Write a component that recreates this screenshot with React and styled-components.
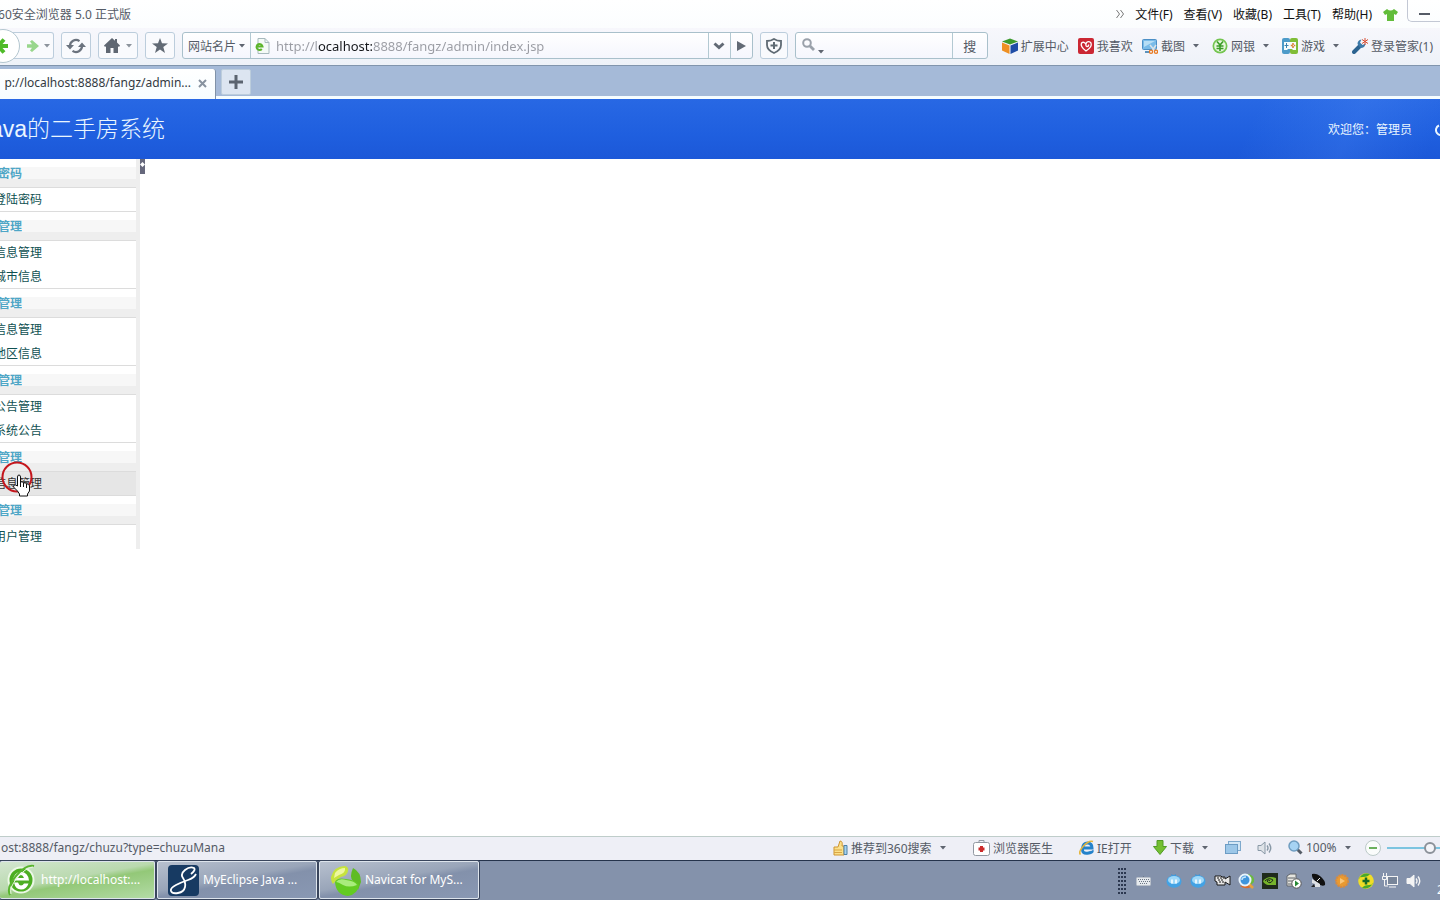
import styled, { createGlobalStyle } from 'styled-components';

const GlobalStyle = createGlobalStyle`
    * {
        box-sizing: border-box;
    }
    body {
        margin: 0;
        font-family: "Noto Sans", "Noto Sans CJK SC", sans-serif;
        font-size: 12px;
        color: #555b66;
    }
    button, input {
        font: inherit;
        color: inherit;
        margin: 0;
        padding: 0;
        border: 0;
        background: none;
    }
    svg {
        display: block;
        flex: none;
    }
`

const Window = styled.div`
    display: flex;
    flex-direction: column;
    min-height: 100vh;
    overflow: hidden;
    background: #fff;
`

/* ---------- title bar ---------- */

const TitleBar = styled.header`
    display: flex;
    align-items: center;
    justify-content: space-between;
    height: 28px;
    background: linear-gradient(#fff, #fbfdfe);
`

const Clip = styled.div`
    display: flex;
    justify-content: flex-end;
    width: ${props => props.$width}px;
    overflow: hidden;
    white-space: nowrap;
`

const MenuBar = styled.nav`
    display: flex;
    align-items: center;
    gap: 11px;
    height: 28px;
    color: #111;
`

const MenuButton = styled.button`
    line-height: 20px;
    padding-top: 1px;
    white-space: nowrap;
`

const MinimizeButton = styled.button`
    align-self: flex-start;
    display: flex;
    align-items: center;
    width: 33px;
    height: 22px;
    margin-left: -2px;
    padding: 8px 0 0 11px;
    border: 1px solid #c3c8d4;
    border-width: 0 0 1px 1px;
    border-radius: 0 0 0 5px;
`

/* ---------- toolbar ---------- */

const Toolbar = styled.div`
    display: flex;
    align-items: center;
    gap: 7px;
    height: 38px;
    padding-bottom: 2px;
    background: linear-gradient(#f7f7fc, #eef2f8);
    border-bottom: 1px solid #8195ad;
`

const NavGroup = styled.div`
    display: flex;
    align-items: center;
    width: 54px;
    height: 27px;
    border: 1px solid #bccddc;
    border-left: 0;
    border-radius: 0 3px 3px 0;
    background: #f9fafd;
`

const BackButton = styled.button`
    display: flex;
    align-items: center;
    justify-content: center;
    flex: none;
    width: 34px;
    height: 34px;
    margin-left: -14px;
    border: 1px solid #b3c6cf;
    border-radius: 50%;
    background: #fff;
`

const PlainButton = styled.button`
    display: flex;
    align-items: center;
    justify-content: center;
    gap: 5px;
    height: 100%;
    padding: 0 7px;
    white-space: nowrap;
`

const ToolButton = styled.button`
    display: flex;
    align-items: center;
    justify-content: center;
    gap: 6px;
    flex: none;
    width: ${props => props.$width}px;
    height: 27px;
    border: 1px solid #bccddc;
    border-radius: 3px;
    background: #f9fafd;
`

const AddressBar = styled.form`
    display: flex;
    align-items: center;
    flex: 1;
    min-width: 0;
    height: 27px;
    border: 1px solid #a9c0cb;
    border-radius: 3px;
    background: linear-gradient(#fff, #f5f6fd);
`

const AddressPart = styled.button`
    display: flex;
    align-items: center;
    justify-content: center;
    gap: 3px;
    flex: none;
    width: ${props => props.$width}px;
    height: 100%;
    white-space: nowrap;
    border: solid #b3c9d2;
    border-width: ${props => props.$first ? '0 1px 0 0' : '0 0 0 1px'};
`

/* the host is darker than the rest of the address */
const AddressInput = styled.input`
    flex: 1;
    min-width: 0;
    height: 25px;
    margin: 0 4px 0 6px;
    font-size: 13px;
    color: #9a9ca3;
    background: linear-gradient(to right, #9a9ca3 42px, #16181c 42px, #16181c 97px, #9a9ca3 97px);
    background-clip: text;
    -webkit-text-fill-color: transparent;
    outline: 0;
`

const SearchBox = styled.form`
    display: flex;
    align-items: center;
    gap: 3px;
    width: 193px;
    height: 27px;
    padding-left: 6px;
    border: 1px solid #a9c0cb;
    border-radius: 3px;
    background: linear-gradient(#fff, #f5f6fd);
`

const SearchType = styled.button`
    display: flex;
    align-items: flex-end;
    gap: 3px;

    & > svg:first-child {
        margin-bottom: 3px;
    }
`

const SearchInput = styled.input`
    flex: 1;
    min-width: 0;
    height: 100%;
    outline: 0;
`

const SearchButton = styled(AddressPart)`
    font-size: 13px;
`

const LinkBar = styled.nav`
    display: flex;
    align-items: center;
    gap: 9px;
    margin: 0 7px;
`

const LinkButton = styled.button`
    display: flex;
    align-items: center;
    gap: 3px;
    padding-right: ${props => props.$menu ? 4 : 0}px;
    white-space: nowrap;

    & > span + svg {
        margin-left: 5px;
    }
`

/* ---------- tabs ---------- */

const TabBar = styled.div`
    display: flex;
    gap: 5px;
    height: 33px;
    padding-top: 3px;
    background: #a5bad8;
    border-bottom: 3px solid #f6fdff;
`

const Tab = styled.div`
    display: flex;
    align-items: center;
    gap: 7px;
    width: 216px;
    height: 30px;
    padding-bottom: 3px;
    color: #333a42;
    background: linear-gradient(#fff, #f6fdff);
    border-right: 1px solid #8092a8;
    border-radius: 0 3px 0 0;
`

const NewTabButton = styled(ToolButton)`
    height: 26px;
    border-radius: 2px;
    background: #dce5f1;
`

/* ---------- page ---------- */

const Banner = styled.header`
    display: flex;
    align-items: center;
    justify-content: space-between;
    height: 60px;
    color: #eaf6ff;
    background:
        linear-gradient(115deg, transparent 86%, rgba(90, 150, 250, .2) 93%, transparent 99%),
        linear-gradient(#2868e4, #1f5fdf 60%, #1c58d8);
`

const SiteTitle = styled.h1`
    margin: 0;
    font: 300 23px/32px "Liberation Sans", "Noto Sans CJK SC", sans-serif;
`

const Welcome = styled.div`
    display: flex;
    align-items: center;
    gap: 22px;
    width: 112px;
    overflow: hidden;
    white-space: nowrap;
`

const Body = styled.main`
    display: flex;
    align-items: flex-start;
    flex: 1;
`

const Sidebar = styled.nav`
    width: 140px;
    border-right: 4px solid #eeeeee;
`

const Heading = styled.h2`
    display: flex;
    align-items: center;
    height: 29px;
    margin: 0;
    font-size: 12px;
    font-weight: 700;
    color: #4ea6c6;
    background: linear-gradient(#fff 8px, #f7f7f7 8px, #f7f7f7 20px, #eeeeee 20px);
    border-bottom: 1px solid #dcdcdc;
`

const List = styled.ul`
    margin: 0;
    padding: 0;
    list-style: none;

    section:not(:last-child) > & > li:last-child {
        border-bottom: 1px solid #dcdcdc;
    }
`

const Item = styled.li`
    position: relative;
    height: 24px;
    background: ${props => props.$active ? '#e6e6e6' : '#fff'};
`

const ItemLink = styled.a`
    display: block;
    line-height: 23px;
    color: ${props => props.$active ? '#333' : '#0f5152'};
    text-decoration: none;
`

const Pointer = styled.svg`
    position: absolute;
    left: 0;
    top: -12px;
`

const Splitter = styled.button`
    display: flex;
    justify-content: center;
    width: 5px;
    height: 15px;
    padding-top: 3px;
    background: #66687c;
`

/* ---------- status bar ---------- */

const StatusBar = styled.footer`
    display: flex;
    align-items: center;
    justify-content: space-between;
    height: 24px;
    padding-bottom: 2px;
    background: #eeeff6;
    border-top: 1px solid #bfcdca;
`

const StatusTools = styled.div`
    display: flex;
    align-items: center;
    width: 607px;
    overflow: hidden;
`

const StatusButton = styled.button`
    display: flex;
    align-items: center;
    gap: 3px;
    flex: none;
    width: ${props => props.$width}px;
    white-space: nowrap;

    & > span + svg {
        margin-left: 5px;
    }
`

const ZoomRange = styled.input`
    flex: none;
    width: 86px;
    height: 14px;
    appearance: none;
    background: linear-gradient(#7cc4e0, #7cc4e0) center / 100% 2px no-repeat;

    &::-webkit-slider-thumb {
        appearance: none;
        width: 12px;
        height: 12px;
        border: 2px solid #8b9199;
        border-radius: 50%;
        background: #f4f5f9;
    }
`

/* ---------- taskbar ---------- */

const Taskbar = styled.footer`
    display: flex;
    justify-content: space-between;
    height: 40px;
    background: #8492ab;
    border-top: 1px solid #26344c;
`

const Tasks = styled.div`
    display: flex;
    gap: 2px;
`

const Task = styled.button`
    display: flex;
    align-items: center;
    gap: ${props => props.$gap}px;
    width: ${props => props.$first ? 155 : 160}px;
    height: 38px;
    padding-left: ${props => props.$first ? 7 : 10}px;
    color: #fff;
    white-space: nowrap;
    border: 1px solid #dde4ec;
    border-left-width: ${props => props.$first ? 0 : 1}px;
    border-radius: 2px;
    box-shadow: 0 0 0 1px #39455c;
    background: ${props => props.$first
        ? 'linear-gradient(170deg, #d3e6d0 0%, #b9d9ae 45%, #93c878 55%, #b3dba6 100%)'
        : 'linear-gradient(170deg, #b7c0ce 0%, #99a5b9 45%, #8391ab 55%, #8998b3 100%)'};
`

const TaskLabel = styled.span`
    padding-bottom: 2px;
`

const Tray = styled.div`
    display: flex;
    align-items: center;
    width: 322px;
    overflow: hidden;
`

const TrayGrip = styled.div`
    flex: none;
    width: 8px;
    height: 30px;
    margin-right: 5px;
    background:
        linear-gradient(#8492ab 2px, transparent 2px) 0 0 / 3px 4px,
        linear-gradient(to right, #2c3850 2px, transparent 2px) 0 0 / 3px 4px;
`

const TrayButton = styled.button`
    display: flex;
    align-items: center;
    justify-content: center;
    flex: none;
    width: ${props => props.$wide ? 25 : 24}px;
    margin-right: ${props => props.$wide ? 6 : 0}px;
    height: 30px;
`

const Clock = styled.time`
    align-self: flex-end;
    padding-left: 11px;
    line-height: 20px;
    color: #fff;
`

/* ---------- icons ---------- */

const Caret = ({ color = '#5f6570' }) => (
    <svg width="6" height="4" viewBox="0 0 6 4"><path d="M0 0h6L3 3.6z" fill={color} /></svg>
);

const ShirtIcon = () => (
    <svg width="15" height="12" viewBox="0 0 15 12"><path d="M4 0Q7.5 3 11 0L15 3l-2 3-2-1v7H4V5L2 6 0 3z" fill="#62bd3a" /></svg>
);

const BackIcon = () => (
    <svg width="18" height="16" viewBox="0 0 18 16"><path d="M10 1.500L4 8l6 6.500M4 8h10" fill="none" stroke="#4fbb28" strokeWidth="4" /></svg>
);

const ForwardIcon = () => (
    <svg width="12" height="12" viewBox="0 0 12 12"><path d="M0 4.200h5L3 1.500 5 0l7 6-7 6-2-1.500L5 7.800H0z" fill="#98d68c" /></svg>
);

const RefreshIcon = () => (
    <svg width="20" height="16" viewBox="0 0 20 16" fill="none" stroke="#6b737e" strokeWidth="2.200">
        <path d="M4 8.500A6 6 0 0 1 13.500 3.200M16 7.500A6 6 0 0 1 6.500 12.800" />
        <path d="M0 7h8l-4 4.500zM20 9h-8l4-4.500z" fill="#6b737e" stroke="none" />
    </svg>
);

const HomeIcon = () => (
    <svg width="16" height="15" viewBox="0 0 16 15"><path d="M8 0l3 2.800V1h2v3.600L16 7.500 15 9l-1-.8V15H9.500v-5h-3v5H2V8.200L1 9 0 7.500z" fill="#5f6772" /></svg>
);

const StarIcon = () => (
    <svg width="16" height="15" viewBox="0 0 16 15"><path d="M8 0l2 5.300 6 .2-4.700 3.600L13 15l-5-3.400L3 15l1.700-5.900L0 5.500l6-.2z" fill="#626a75" /></svg>
);

const PageIcon = () => (
    <svg width="15" height="16" viewBox="0 0 15 16">
        <path d="M3 .5h7l4 4v11H3z" fill="#f4faf6" stroke="#a7b9bd" />
        <path d="M10 .5v4h4" fill="none" stroke="#a7b9bd" />
        <path d="M1.500 8.500h6A3 3 0 1 0 6.800 11" fill="none" stroke="#5db52c" strokeWidth="2" />
    </svg>
);

const ChevronIcon = () => (
    <svg width="12" height="8" viewBox="0 0 12 8"><path d="M1.500 1.500L6 5.500l4.500-4" fill="none" stroke="#626a75" strokeWidth="3" /></svg>
);

const GoIcon = () => (
    <svg width="9" height="10" viewBox="0 0 9 10"><path d="M0 0l9 5-9 5z" fill="#626a75" /></svg>
);

const ShieldIcon = () => (
    <svg width="16" height="16" viewBox="0 0 16 16" fill="none" stroke="#5f6a73">
        <path d="M8 1Q11 3 15 3v4q0 5-7 8-7-3-7-8V3q4 0 7-2z" strokeWidth="1.800" />
        <path d="M8 4v7M4.500 7.500h7" strokeWidth="2" />
    </svg>
);

const SearchIcon = () => (
    <svg width="13" height="13" viewBox="0 0 13 13" fill="none" stroke="#9aa1aa">
        <circle cx="5" cy="5" r="3.800" strokeWidth="2" />
        <path d="M8 8l4 4" strokeWidth="2.800" />
    </svg>
);

const CubeIcon = () => (
    <svg width="16" height="16" viewBox="0 0 16 16">
        <path d="M0 3.500L8 .5l8 3-8 3z" fill="#3c9a2c" />
        <path d="M0 4.500l7.500 3V16L0 12.500z" fill="#ee9022" />
        <path d="M16 4.500l-7.500 3V16l7.500-3.500z" fill="#1f4da6" />
    </svg>
);

const HeartIcon = () => (
    <svg width="16" height="16" viewBox="0 0 16 16">
        <rect width="16" height="16" rx="2" fill="#cb2733" />
        <path d="M8 6.500Q6 3 3.500 5 2 8.500 8 13 14.500 9 13 5 11 2.500 8.500 4.500 7 8 9 8.500q2 0 1.500-2" fill="none" stroke="#fff" strokeWidth="1.300" />
    </svg>
);

const ShotIcon = () => (
    <svg width="16" height="16" viewBox="0 0 16 16">
        <rect x=".5" y="1.500" width="14" height="10" rx="1" fill="#79bbe8" stroke="#4c8fc6" />
        <path d="M2 3h11L2 9z" fill="#b7def5" />
        <path d="M3 14h5" stroke="#5b93bd" strokeWidth="2" />
        <path d="M8 7l5 6M14 7l-4 6" stroke="#dce3e8" strokeWidth="1.500" />
        <circle cx="9" cy="13.700" r="1.600" fill="none" stroke="#e97a21" strokeWidth="1.300" />
        <circle cx="14" cy="13.700" r="1.600" fill="none" stroke="#e97a21" strokeWidth="1.300" />
    </svg>
);

const BankIcon = () => (
    <svg width="16" height="16" viewBox="0 0 16 16">
        <circle cx="8" cy="8" r="7.500" fill="#74c551" />
        <circle cx="8" cy="8" r="5.800" fill="#e7f6dd" />
        <path d="M5 3.500l3 3.500 3-3.500M8 7v6M4.500 8h7M4.500 10.500h7" fill="none" stroke="#3a9c27" strokeWidth="1.600" />
    </svg>
);

const GameIcon = () => (
    <svg width="16" height="16" viewBox="0 0 16 16">
        <rect width="8" height="16" rx="2" fill="#4d9bc9" />
        <rect x="8" width="8" height="16" rx="2" fill="#7fbd37" />
        <path d="M2 4h12v8h-3l-1-1H6l-1 1H2z" fill="#f6fbfb" />
        <path d="M4.500 5v5M2.500 7.500h4" stroke="#3d82b0" />
        <path d="M11 5v5M8.800 7.500h4.500" stroke="#d7812d" strokeDasharray="2 1" strokeWidth="1.500" />
    </svg>
);

const WrenchIcon = () => (
    <svg width="16" height="16" viewBox="0 0 16 16">
        <path d="M2 14l6-6" stroke="#2b6390" strokeWidth="4" strokeLinecap="round" />
        <path d="M5.500 6Q5.500 2 9.500 1.500L8 4.500 10.500 7l3-1.500Q13 10 8.500 10z" fill="#3d7aa9" />
        <path d="M13 0v7M10 1.500l6 4M16 1.500l-6 4" stroke="#d84d32" />
    </svg>
);

const CloseIcon = () => (
    <svg width="9" height="9" viewBox="0 0 9 9"><path d="M1 1l7 7M8 1L1 8" stroke="#8793a0" strokeWidth="2" /></svg>
);

const PlusIcon = () => (
    <svg width="14" height="14" viewBox="0 0 14 14"><path d="M7 0v14M0 7h14" stroke="#5b6470" strokeWidth="3" /></svg>
);

const ExitIcon = () => (
    <svg width="13" height="13" viewBox="0 0 13 13"><path d="M5 2.500A5 5 0 1 0 9 2.500" fill="none" stroke="#eaf6ff" strokeWidth="2" /></svg>
);

const ThumbIcon = () => (
    <svg width="15" height="16" viewBox="0 0 15 16">
        <path d="M1 7h4l2-6q3 0 2 5h2v9H1z" fill="#fbe08a" stroke="#cf9530" />
        <path d="M1 10h8M1 12.500h8" stroke="#d9a545" />
        <path d="M11 5.500h3v9h-3z" fill="#a7d2ee" stroke="#4c81a8" />
    </svg>
);

const DoctorIcon = () => (
    <svg width="17" height="16" viewBox="0 0 17 16">
        <path d="M6 2V.5h5V2" fill="none" stroke="#9299a3" />
        <rect x=".5" y="2.500" width="16" height="13" rx="2" fill="#fff" stroke="#9299a3" />
        <path d="M8.500 6v6M5.500 9h6" stroke="#cb2b2b" strokeWidth="3" />
    </svg>
);

const IeIcon = () => (
    <svg width="15" height="15" viewBox="0 0 15 15">
        <path d="M4 8h9Q13 3 8.500 3T3.500 8.500 8.500 13.200 13 10.500" fill="none" stroke="#2582ca" strokeWidth="3" />
        <path d="M1.500 14.500Q-1 12 4.500 6T14 1.500" fill="none" stroke="#e4b53c" strokeWidth="1.600" />
    </svg>
);

const DownloadIcon = () => (
    <svg width="14" height="15" viewBox="0 0 14 15"><path d="M4 .5h6v6h3.500L7 14.500.5 6.500H4z" fill="#74bf32" stroke="#519b26" /></svg>
);

const WindowsIcon = () => (
    <svg width="16" height="13" viewBox="0 0 16 13">
        <rect x="3.500" y=".5" width="12" height="9" fill="#d3e7f6" stroke="#7ea9cc" />
        <rect x=".5" y="3.500" width="12" height="9" fill="#9cc7e8" stroke="#6c9cc4" />
    </svg>
);

const SpeakerIcon = ({ fill, stroke }) => (
    <svg width="16" height="14" viewBox="0 0 16 14">
        <path d="M1 4.500h3L8 1v12L4 9.500H1z" fill={fill} stroke={stroke} />
        <path d="M10 4.500q2 2.500 0 5M12 2.500q3.500 4.500 0 9" fill="none" stroke={stroke} strokeWidth="1.400" />
    </svg>
);

const ZoomIcon = () => (
    <svg width="15" height="15" viewBox="0 0 15 15">
        <path d="M9 9l4.500 4.500" stroke="#555c66" strokeWidth="3" />
        <circle cx="6" cy="6" r="5" fill="#a6d3f3" stroke="#6f9dc0" strokeWidth="1.500" />
    </svg>
);

const MinusIcon = () => (
    <svg width="16" height="16" viewBox="0 0 16 16">
        <circle cx="8" cy="8" r="7.500" fill="#fafcfb" stroke="#bccac8" />
        <path d="M4 8h8" stroke="#6bb15d" strokeWidth="2" />
    </svg>
);

const BrowserLogo = () => (
    <svg width="28" height="32" viewBox="0 0 28 32">
        <circle cx="14" cy="16" r="12.500" fill="#4cae22" stroke="#ecf8e6" strokeWidth="2" />
        <path d="M6 16.500h16Q21 8 14 8T6 16.500z" fill="#fff" />
        <path d="M11 14h6q-1-3-3-3t-3 3z" fill="#4cae22" />
        <path d="M7 18.500h4q1 3 3 3 2 0 3-2h4.500q-2 6-7.500 6t-7-7z" fill="#fff" />
        <path d="M3 31Q-1 24 9 12T27 2" fill="none" stroke="#59b52e" strokeWidth="2" />
        <path d="M4 30Q2 24 10 14T26 3" fill="none" stroke="#e4f5dc" />
    </svg>
);

const MyEclipseLogo = () => (
    <svg width="31" height="31" viewBox="0 0 31 31">
        <rect width="31" height="31" rx="4" fill="#173a62" />
        <path d="M23 9Q28 5 26 3 22 1 17 5T15 13 17 22 10 28 3 26 8 20 20 15 28 9" fill="none" stroke="#fff" strokeWidth="1.800" />
    </svg>
);

const NavicatLogo = () => (
    <svg width="32" height="31" viewBox="0 0 32 31">
        <path d="M1 12Q4 1 15 1q4 1 3 5-1 5-7 6-4 2-8 7-2-2-2-7z" fill="#c6e33d" />
        <path d="M23 3q8 4 8 14l-3 8q-1-6-5-9-4-4 0-13z" fill="#5fbc24" />
        <path d="M5 17q2-5 11-3 10 1 13 6-1 9-11 11Q6 30 5 17z" fill="#63cb22" />
        <path d="M6 17q3-4 10-2 9 1 11 5-8 3-14 0-5-3-7-3z" fill="#a9ec7c" />
        <path d="M5 8Q9 3 15 3q1 5-6 7L4 13z" fill="#eef7a0" />
    </svg>
);

const KeyboardIcon = () => (
    <svg width="15" height="11" viewBox="0 0 15 11">
        <rect x=".5" y="2.500" width="14" height="8" rx="1" fill="#e6eaee" stroke="#b9c0ca" />
        <path d="M7.500 2V0M2 4.500h11M3 6.500h11M4 8.500h7" stroke="#6e7886" strokeDasharray="1 1" />
    </svg>
);

const BubbleIcon = () => (
    <svg width="16" height="15" viewBox="0 0 16 15">
        <path d="M5 1q3 2 5 0v3H6z" fill="#3d93d4" />
        <ellipse cx="8" cy="8.500" rx="7.500" ry="6.200" fill="#43a2e4" />
        <ellipse cx="8" cy="7" rx="6" ry="4" fill="#9fd8f8" />
        <path d="M6 6.500v4M10 6.500v4" stroke="#fff" strokeWidth="1.500" />
    </svg>
);

const CameraIcon = () => (
    <svg width="17" height="13" viewBox="0 0 17 13">
        <path d="M1 2h6l1 1h3v2l5-3v9l-5-3v3H3V8L1 7z" fill="#e8e8e8" stroke="#1b1b1b" />
        <path d="M3 4h7M4 6h5M5 8h5" stroke="#1b1b1b" strokeDasharray="2 1" />
    </svg>
);

const FinderIcon = () => (
    <svg width="17" height="16" viewBox="0 0 17 16">
        <path d="M10 1q7 1 6 8l-4 4z" fill="#6ab940" />
        <path d="M2 13q6 4 11 1l-3-3z" fill="#dc6d2b" />
        <path d="M11 11l4 4" stroke="#e7a13e" strokeWidth="2.500" />
        <circle cx="7" cy="7" r="5.500" fill="#3f95dc" stroke="#e9f4fc" strokeWidth="2" />
        <path d="M4 7q0-3 4-3" stroke="#c7e6fb" strokeWidth="1.500" fill="none" />
    </svg>
);

const NvidiaIcon = () => (
    <svg width="16" height="16" viewBox="0 0 16 16">
        <rect width="16" height="16" fill="#1f2b1b" />
        <path d="M1 8q5-6 13-3v7H6Q2 11 1 8z" fill="#76b52b" />
        <path d="M3 8q4-4 8-1-3 5-6 1 2-2 3 0" fill="none" stroke="#1f2b1b" />
    </svg>
);

const ServerIcon = () => (
    <svg width="16" height="16" viewBox="0 0 16 16">
        <path d="M1 3l3-2h6v12H1z" fill="#e5e5df" stroke="#61656b" />
        <path d="M2 5h7M2 8h7M2 11h5" stroke="#61656b" />
        <circle cx="10.500" cy="10.500" r="4.700" fill="#fff" stroke="#555" />
        <path d="M9 7.500l4 3-4 3z" fill="#278a35" />
    </svg>
);

const DishIcon = () => (
    <svg width="16" height="15" viewBox="0 0 16 15">
        <path d="M2 1q4-1 8 2 6 5 5 9-3 2-8-2Q1 5 2 1z" fill="#111" />
        <path d="M2 6v4l3 1v3h5v-3L7 9" fill="#dfe2e6" />
        <path d="M7 8l3-3" stroke="#f3f3f3" />
        <path d="M1 14h4l-1-3z" fill="#222" />
    </svg>
);

const OrangeIcon = () => (
    <svg width="14" height="14" viewBox="0 0 14 14">
        <circle cx="7" cy="7" r="6" fill="#e99a31" stroke="#d68b40" strokeDasharray="2 1" strokeWidth="2" />
        <path d="M5 4l5 3-5 3z" fill="#fac677" />
    </svg>
);

const SafeIcon = () => (
    <svg width="16" height="16" viewBox="0 0 16 16">
        <circle cx="8" cy="8" r="7.800" fill="#f0dd27" />
        <path d="M1 6q3-7 11-5-2 3-7 3T1 6zM15 10q-3 7-11 5 2-3 7-3t4-2z" fill="#48a92c" />
        <path d="M8 4.500v7M4.500 8h7" stroke="#166a28" strokeWidth="2.500" />
    </svg>
);

const NetworkIcon = () => (
    <svg width="16" height="15" viewBox="0 0 16 15">
        <rect x="5.500" y="3.500" width="10" height="8" fill="#788599" stroke="#f4f4f4" />
        <path d="M7 14h7M2.500 7v6H6M1.500 0v4M4.500 0v4M.5 3.500h4v3h-4z" stroke="#f4f4f4" fill="none" />
    </svg>
);

/* ---------- data ---------- */

const menus = ['文件(F)', '查看(V)', '收藏(B)', '工具(T)', '帮助(H)'];

const links = [
    { label: '扩展中心', Icon: CubeIcon },
    { label: '我喜欢', Icon: HeartIcon },
    { label: '截图', Icon: ShotIcon, menu: true },
    { label: '网银', Icon: BankIcon, menu: true },
    { label: '游戏', Icon: GameIcon, menu: true },
    { label: '登录管家(1)', Icon: WrenchIcon },
];

const sections = [
    { title: '密码', items: ['登陆密码'] },
    { title: '管理', items: ['信息管理', '城市信息'] },
    { title: '管理', items: ['信息管理', '地区信息'] },
    { title: '管理', items: ['公告管理', '系统公告'] },
    { title: '管理', items: ['信息管理'], active: true },
    { title: '管理', items: ['用户管理'] },
];

const trayIcons = [
    ['消息', BubbleIcon], ['消息', BubbleIcon], ['录像', CameraIcon], ['搜索', FinderIcon],
    ['NVIDIA', NvidiaIcon], ['服务', ServerIcon], ['雷达', DishIcon], ['播放', OrangeIcon],
    ['安全', SafeIcon], ['网络', NetworkIcon],
];

function BrowserChrome () {
    return (
        <>
            <TitleBar>
                <Clip $width={131}>60安全浏览器 5.0 正式版</Clip>
                <MenuBar>
                    <svg width="8" height="8" viewBox="0 0 8 8"><path d="M.5 0l3 4-3 4M4.500 0l3 4-3 4" fill="none" stroke="#777" /></svg>
                    {menus.map(menu => <MenuButton key={menu}>{menu}</MenuButton>)}
                    <MenuButton aria-label="皮肤"><ShirtIcon /></MenuButton>
                    <MinimizeButton aria-label="最小化">
                        <svg width="11" height="3"><rect width="11" height="2" fill="#555b66" /></svg>
                    </MinimizeButton>
                </MenuBar>
            </TitleBar>
            <Toolbar>
                <NavGroup>
                    <BackButton aria-label="后退"><BackIcon /></BackButton>
                    <PlainButton aria-label="前进"><ForwardIcon /><Caret color="#8c939c" /></PlainButton>
                </NavGroup>
                <ToolButton $width={30} aria-label="刷新"><RefreshIcon /></ToolButton>
                <ToolButton $width={40} aria-label="主页"><HomeIcon /><Caret color="#8c939c" /></ToolButton>
                <ToolButton $width={30} aria-label="收藏"><StarIcon /></ToolButton>
                <AddressBar onSubmit={e => e.preventDefault()}>
                    <AddressPart type="button" $first $width={68}>网站名片<Caret /></AddressPart>
                    <svg width="4" height="1" />
                    <PageIcon />
                    <AddressInput aria-label="地址" defaultValue="http://localhost:8888/fangz/admin/index.jsp" />
                    <AddressPart type="button" $width={22} aria-label="历史"><ChevronIcon /></AddressPart>
                    <AddressPart $width={22} aria-label="转到"><GoIcon /></AddressPart>
                </AddressBar>
                <ToolButton $width={28} aria-label="安全"><ShieldIcon /></ToolButton>
                <SearchBox onSubmit={e => e.preventDefault()}>
                    <SearchType type="button" aria-label="搜索引擎"><SearchIcon /><Caret /></SearchType>
                    <SearchInput aria-label="搜索" />
                    <SearchButton $width={35}>搜</SearchButton>
                </SearchBox>
                <LinkBar>
                    {links.map(({ label, Icon, menu }) => (
                        <LinkButton key={label} $menu={menu}>
                            <Icon />
                            <span>{label}</span>
                            {menu && <Caret />}
                        </LinkButton>
                    ))}
                </LinkBar>
            </Toolbar>
            <TabBar>
                <Tab>
                    <Clip $width={191}>p://localhost:8888/fangz/admin...</Clip>
                    <MenuButton aria-label="关闭标签"><CloseIcon /></MenuButton>
                </Tab>
                <NewTabButton $width={30} aria-label="新标签"><PlusIcon /></NewTabButton>
            </TabBar>
        </>
    );
}

function Menu () {
    return (
        <Sidebar>
            {sections.map(({ title, items, active }, index) => (
                <section key={index}>
                    <Heading><Clip $width={22}>{title}</Clip></Heading>
                    <List>
                        {items.map(item => (
                            <Item key={item} $active={active}>
                                <ItemLink href="#" $active={active}><Clip $width={42}>{item}</Clip></ItemLink>
                                {active && (
                                    <Pointer width="36" height="42" viewBox="0 0 36 42">
                                        <circle cx="17" cy="17" r="14.500" fill="none" stroke="#c4161c" strokeWidth="2" />
                                        <path d="M17.500 17q0-2 1.500-2t1.500 2v5q2-1 3 1 2-1 3 1 3-1 3 2v5l-2 3v2h-8v-2l-2-3-4-4q0-3 2-2l2 1z" fill="#fff" stroke="#111" />
                                        <path d="M20.500 22v5M23.500 23v4M26.500 24v4" stroke="#111" />
                                    </Pointer>
                                )}
                            </Item>
                        ))}
                    </List>
                </section>
            ))}
        </Sidebar>
    );
}

function App () {
    return (
        <Window>
            <GlobalStyle />
            <BrowserChrome />
            <Banner>
                <SiteTitle><Clip $width={165}>ava的二手房系统</Clip></SiteTitle>
                <Welcome><span>欢迎您：管理员</span><ExitIcon /></Welcome>
            </Banner>
            <Body>
                <Menu />
                <Splitter aria-label="收起菜单">
                    <svg width="5" height="5" viewBox="0 0 5 5"><path d="M2.500 0L5 2.500 2.500 5 0 2.500z" fill="#fff" /></svg>
                </Splitter>
            </Body>
            <StatusBar>
                <Clip $width={225}>ost:8888/fangz/chuzu?type=chuzuMana</Clip>
                <StatusTools>
                    <StatusButton $width={140}><ThumbIcon /><span>推荐到360搜索</span><Caret /></StatusButton>
                    <StatusButton $width={106}><DoctorIcon /><span>浏览器医生</span></StatusButton>
                    <StatusButton $width={74}><IeIcon /><span>IE打开</span></StatusButton>
                    <StatusButton $width={72}><DownloadIcon /><span>下载</span><Caret /></StatusButton>
                    <StatusButton $width={32} aria-label="窗口"><WindowsIcon /></StatusButton>
                    <StatusButton $width={31} aria-label="声音"><SpeakerIcon fill="#dfe3e8" stroke="#8898a6" /></StatusButton>
                    <StatusButton $width={77}><ZoomIcon /><span>100%</span><Caret /></StatusButton>
                    <StatusButton $width={22} aria-label="缩小"><MinusIcon /></StatusButton>
                    <ZoomRange type="range" aria-label="缩放" defaultValue="50" />
                </StatusTools>
            </StatusBar>
            <Taskbar>
                <Tasks>
                    <Task $first $gap={6}><BrowserLogo /><TaskLabel>http://localhost:...</TaskLabel></Task>
                    <Task $gap={4}><MyEclipseLogo /><TaskLabel>MyEclipse Java ...</TaskLabel></Task>
                    <Task $gap={3}><NavicatLogo /><TaskLabel>Navicat for MyS...</TaskLabel></Task>
                </Tasks>
                <Tray>
                    <TrayGrip />
                    <TrayButton $wide aria-label="键盘"><KeyboardIcon /></TrayButton>
                    {trayIcons.map(([label, Icon], index) => (
                        <TrayButton key={index} aria-label={label}><Icon /></TrayButton>
                    ))}
                    <TrayButton aria-label="音量"><SpeakerIcon fill="#f4f4f4" stroke="#f4f4f4" /></TrayButton>
                    <Clock>2</Clock>
                </Tray>
            </Taskbar>
        </Window>
    );
}

export default App;
